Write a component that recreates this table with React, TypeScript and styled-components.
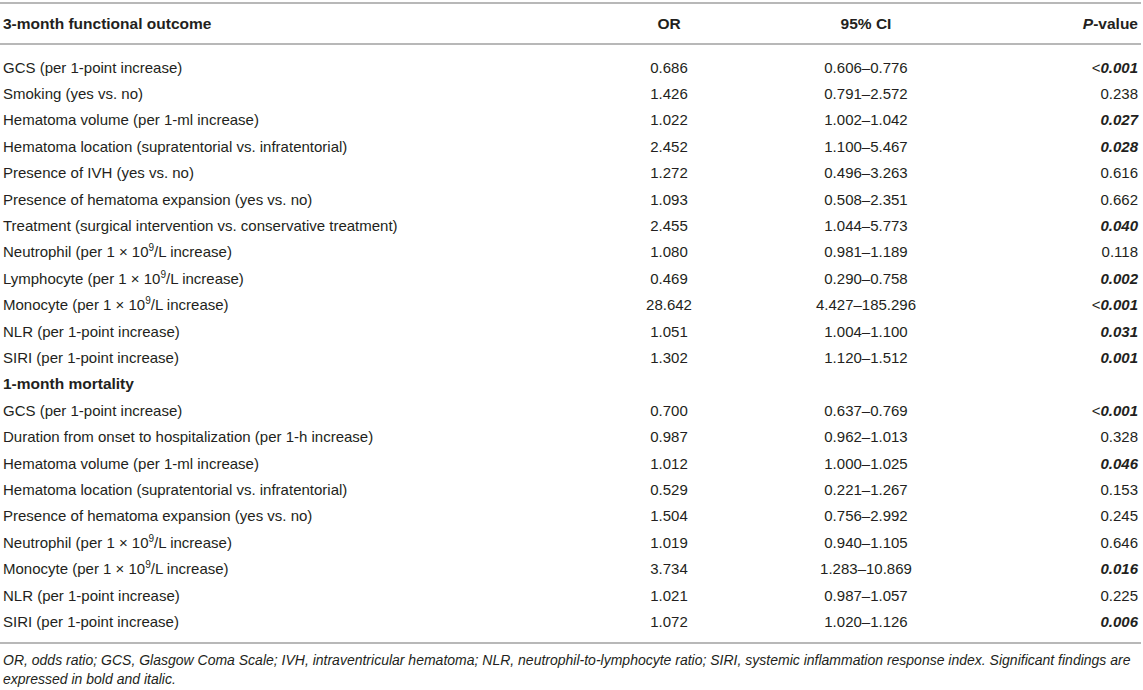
import React from "react";
import styled, { createGlobalStyle } from "styled-components";

const Global = createGlobalStyle`
  html, body { margin: 0; padding: 0; background: #ffffff; }
  body { font-family: "Liberation Sans", Arial, Helvetica, sans-serif; color: #231f20; }
`;

const Page = styled.div`
  width: 1141px;
  padding-top: 2px;
`;

const Table = styled.div`
  border-top: 2px solid #b8b8b8;
  border-bottom: 2px solid #b8b8b8;
`;

const Row = styled.div<{ $head?: boolean }>`
  display: grid;
  grid-template-columns: 570px 198px 196px 1fr;
  align-items: center;
  height: ${(p) => (p.$head ? "39px" : "26.4px")};
  font-size: ${(p) => (p.$head ? "15.5px" : "15px")};
  font-weight: ${(p) => (p.$head ? 700 : 400)};
  ${(p) => (p.$head ? "border-bottom: 2px solid #b8b8b8;" : "")}
`;

const Body = styled.div`
  padding: 9px 0 7px;
`;

const Label = styled.div<{ $bold?: boolean }>`
  padding-left: 3px;
  white-space: nowrap;
  font-weight: ${(p) => (p.$bold ? 700 : "inherit")};
  font-size: ${(p) => (p.$bold ? "15.5px" : "inherit")};
`;

const Center = styled.div`
  text-align: center;
  white-space: nowrap;
`;

const Right = styled.div<{ $sig?: boolean }>`
  text-align: right;
  padding-right: 3px;
  white-space: nowrap;
  font-weight: ${(p) => (p.$sig ? 700 : "inherit")};
  font-style: ${(p) => (p.$sig ? "italic" : "inherit")};
`;

const Lt = styled.span`
  font-weight: 400;
  font-style: normal;
`;

const Sup = styled.sup`
  font-size: 10px;
  line-height: 0;
  vertical-align: 6px;
`;

const Footnote = styled.p`
  margin: 0;
  padding: 7px 0 0 3px;
  font-size: 14px;
  line-height: 19px;
  font-style: italic;
`;

type R = { label: React.ReactNode; or?: string; ci?: string; p?: string; sig?: boolean; section?: boolean };

const per109 = (name: string) => (
  <>
    {name} (per 1 × 10<Sup>9</Sup>/L increase)
  </>
);

const rows: R[] = [
  { label: "GCS (per 1-point increase)", or: "0.686", ci: "0.606–0.776", p: "<0.001", sig: true },
  { label: "Smoking (yes vs. no)", or: "1.426", ci: "0.791–2.572", p: "0.238" },
  { label: "Hematoma volume (per 1-ml increase)", or: "1.022", ci: "1.002–1.042", p: "0.027", sig: true },
  { label: "Hematoma location (supratentorial vs. infratentorial)", or: "2.452", ci: "1.100–5.467", p: "0.028", sig: true },
  { label: "Presence of IVH (yes vs. no)", or: "1.272", ci: "0.496–3.263", p: "0.616" },
  { label: "Presence of hematoma expansion (yes vs. no)", or: "1.093", ci: "0.508–2.351", p: "0.662" },
  { label: "Treatment (surgical intervention vs. conservative treatment)", or: "2.455", ci: "1.044–5.773", p: "0.040", sig: true },
  { label: per109("Neutrophil"), or: "1.080", ci: "0.981–1.189", p: "0.118" },
  { label: per109("Lymphocyte"), or: "0.469", ci: "0.290–0.758", p: "0.002", sig: true },
  { label: per109("Monocyte"), or: "28.642", ci: "4.427–185.296", p: "<0.001", sig: true },
  { label: "NLR (per 1-point increase)", or: "1.051", ci: "1.004–1.100", p: "0.031", sig: true },
  { label: "SIRI (per 1-point increase)", or: "1.302", ci: "1.120–1.512", p: "0.001", sig: true },
  { label: "1-month mortality", section: true },
  { label: "GCS (per 1-point increase)", or: "0.700", ci: "0.637–0.769", p: "<0.001", sig: true },
  { label: "Duration from onset to hospitalization (per 1-h increase)", or: "0.987", ci: "0.962–1.013", p: "0.328" },
  { label: "Hematoma volume (per 1-ml increase)", or: "1.012", ci: "1.000–1.025", p: "0.046", sig: true },
  { label: "Hematoma location (supratentorial vs. infratentorial)", or: "0.529", ci: "0.221–1.267", p: "0.153" },
  { label: "Presence of hematoma expansion (yes vs. no)", or: "1.504", ci: "0.756–2.992", p: "0.245" },
  { label: per109("Neutrophil"), or: "1.019", ci: "0.940–1.105", p: "0.646" },
  { label: per109("Monocyte"), or: "3.734", ci: "1.283–10.869", p: "0.016", sig: true },
  { label: "NLR (per 1-point increase)", or: "1.021", ci: "0.987–1.057", p: "0.225" },
  { label: "SIRI (per 1-point increase)", or: "1.072", ci: "1.020–1.126", p: "0.006", sig: true },
];

const PValue = ({ v, sig }: { v?: string; sig?: boolean }) => {
  if (!v) return <Right />;
  if (v.startsWith("<")) {
    return (
      <Right $sig={sig}>
        <Lt>&lt;</Lt>
        {v.slice(1)}
      </Right>
    );
  }
  return <Right $sig={sig}>{v}</Right>;
};

export default function App() {
  return (
    <Page>
      <Global />
      <Table>
        <Row $head>
          <Label>3-month functional outcome</Label>
          <Center>OR</Center>
          <Center>95% CI</Center>
          <Right>
            <i>P</i>-value
          </Right>
        </Row>
        <Body>
          {rows.map((r, i) => (
            <Row key={i}>
              <Label $bold={r.section}>{r.label}</Label>
              <Center>{r.or}</Center>
              <Center>{r.ci}</Center>
              <PValue v={r.p} sig={r.sig} />
            </Row>
          ))}
        </Body>
      </Table>
      <Footnote>
        OR, odds ratio; GCS, Glasgow Coma Scale; IVH, intraventricular hematoma; NLR, neutrophil-to-lymphocyte ratio;
        SIRI, systemic inflammation response index. Significant findings are expressed in bold and italic.
      </Footnote>
    </Page>
  );
}
